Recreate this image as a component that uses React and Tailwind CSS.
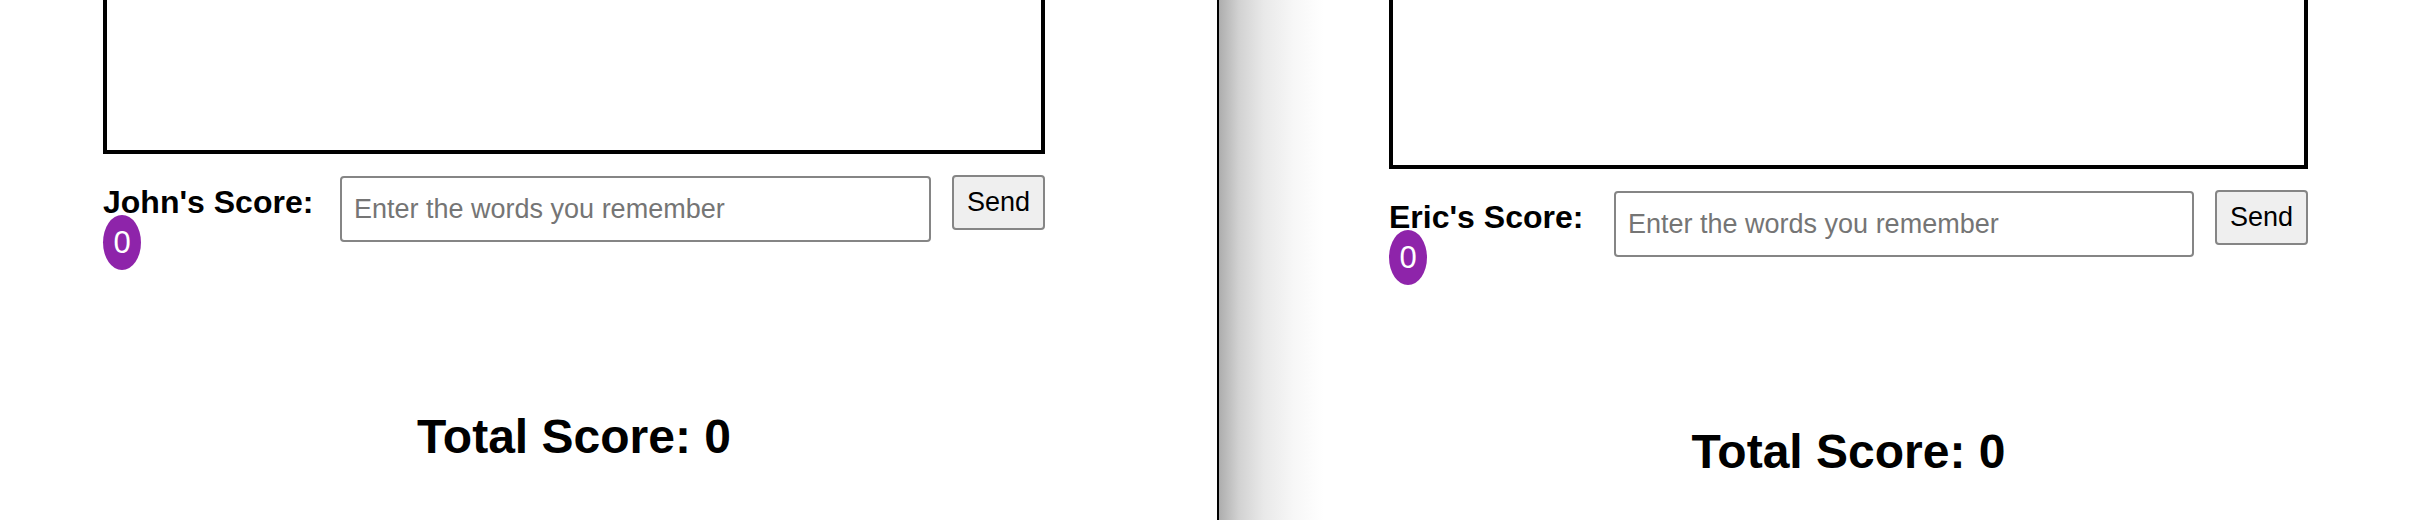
import React from 'react';

const Page = ({ name, className, labelWidth }) => {
  return (
    <section className={className}>
      <div className="h-[200px] -mt-[46px] border-4 border-black bg-white" />

      <div className="mt-[21px] flex items-start">
        <div className={`${labelWidth} shrink-0 pt-[11px]`}>
          <div className="text-[32px] font-bold leading-[32px] text-black">{name}'s Score:</div>
          <span className="-mt-[3px] flex h-[55px] w-[38px] items-center justify-center rounded-[50%] bg-[#8e24aa] text-[31px] leading-none text-white">
            0
          </span>
        </div>
        <input
          type="text"
          placeholder="Enter the words you remember"
          className="mt-[1px] h-[66px] min-w-0 flex-1 rounded-[4px] border-2 border-[#858585] bg-white pl-[12px] text-[27px] text-black placeholder:text-[#757575] focus:outline-none"
        />
        <button className="ml-[21px] h-[55px] w-[93px] shrink-0 rounded-[4px] border-2 border-[#858585] bg-[#efefef] text-[27px] text-black">
          Send
        </button>
      </div>

      <h2 className="mt-[143px] text-center text-[48px] font-bold leading-[48px] text-black">Total Score: 0</h2>
    </section>
  );
};

export default function App() {
  return (
    <div className="flex h-[520px] w-[2434px] overflow-hidden bg-white font-['Liberation_Sans',Arial,sans-serif]">
      <Page name="John" className="w-[1217px] shrink-0 pl-[103px] pr-[172px]" labelWidth="w-[237px]" />
      <Page
        name="Eric"
        className="flex-1 border-l-2 border-black bg-[linear-gradient(to_right,#adadad_0px,#d2d2d2_20px,#e9e9e9_45px,#f7f7f7_75px,#ffffff_105px)] pl-[170px] pr-[126px] pt-[15px]"
        labelWidth="w-[225px]"
      />
    </div>
  );
}
